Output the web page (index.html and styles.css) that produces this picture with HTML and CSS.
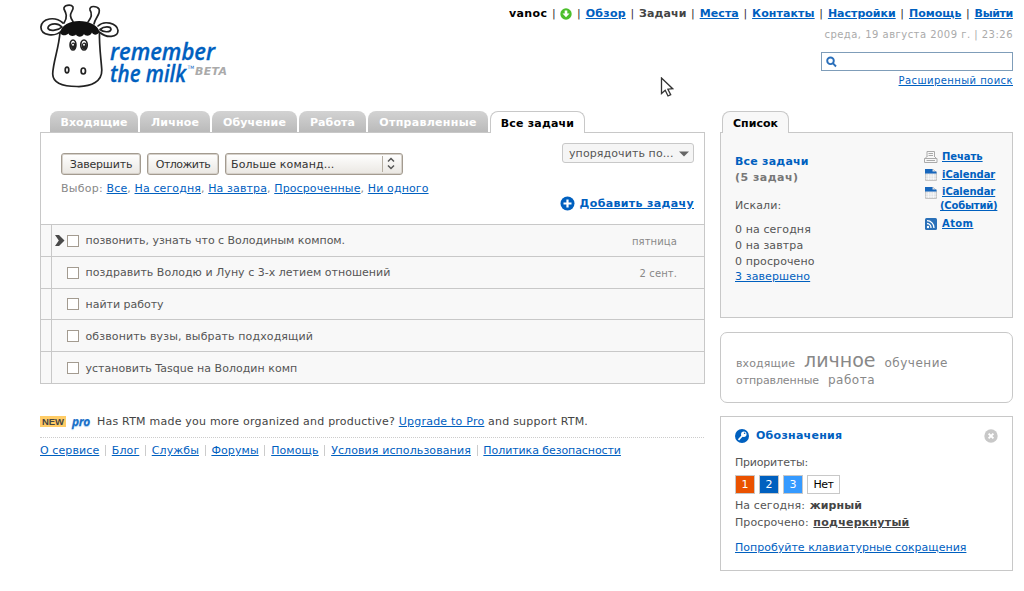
FILE: index.html
```html
<!DOCTYPE html>
<html lang="ru">
<head>
<meta charset="utf-8">
<title>Remember The Milk - Все задачи</title>
<link rel="stylesheet" href="styles.css">
</head>
<body>
<div class="page">
  <header class="header">
    <svg class="logo" width="200" height="92" viewBox="0 0 200 92" role="img" aria-label="Remember the milk">
      <g fill="#fff" stroke="#222" stroke-width="1.700" stroke-linejoin="round" stroke-linecap="round">
        <path d="M20 32C19 48 13 62 12.700 74C13 84 24 86.500 37 86.500C52 87 62 81 61.800 70C61 58 59 46 59.500 31"/>
        <path d="M24 23C28 17 26 13 24 9C23 5 31 4 33 7C34 10 30 12 30.500 16C31 19 32 20 33 21.500"/>
        <path d="M48 22C52 17 52 13 50 10C49 5 57 6 59 9C61 14 55 18 54 24"/>
        <path d="M23 23C15 16 2 18 .900 27C1 36 15 37 21.500 31"/>
        <path d="M22 27C16 21 7 25 8 28.500C10 32 19 30 22 27Z"/>
        <path d="M58 26C64 20 77 23 78 30.500C78 38 66 38 60 32.500"/>
        <path d="M60 29.500C64 26 71 26 71 29.500C70 33 63 32 60 29.500Z"/>
        <ellipse cx="33" cy="45" rx="2.900" ry="5"/><ellipse cx="44" cy="45" rx="3.200" ry="5"/>
        <ellipse cx="27" cy="70" rx="1.800" ry="2.800"/><ellipse cx="43.300" cy="71" rx="2.200" ry="3"/>
      </g>
      <path d="M20 33C21 25 30 21 39 21C49 21 58 25 59.500 32C57 36 53 35 52 32.500C50 37 45 36 44 34C42 38 37 37 36 34.500C34 37 29 36 28.500 33.500C26 36 22 36 20 33Z" fill="#111"/>
      <ellipse cx="33.300" cy="46" rx="2.300" ry="3.500" fill="#222"/><ellipse cx="44.300" cy="46" rx="2.500" ry="3.500" fill="#222"/>
      <circle cx="33" cy="44.700" r="1" fill="#fff"/><circle cx="44" cy="44.700" r="1" fill="#fff"/>
      <g class="logo-text">
        <text x="70" y="59.500" textLength="105" lengthAdjust="spacingAndGlyphs">remember</text>
        <text x="70" y="81.500" textLength="76" lengthAdjust="spacingAndGlyphs">the milk</text>
      </g>
      <text class="logo-tm" x="147.500" y="68.500">TM</text>
      <text class="logo-beta" x="155" y="74.500" textLength="32">BETA</text>
    </svg>
    <div class="head-right">
      <nav class="topnav">
        <b class="user">vanoc</b><i>|</i>
        <svg width="12" height="12" viewBox="0 0 12 12"><circle cx="6" cy="6" r="5.700" fill="#4bbf2b"/><path d="M4.700 2.500h2.600v3H9.500L6 9.300 2.500 5.500h2.200z" fill="#fff"/></svg>
        <i>|</i><a class="s3">Обзор</a><i>|</i><b>Задачи</b><i>|</i><a>Места</a><i>|</i><a>Контакты</a><i>|</i><a class="s0">Настройки</a><i>|</i><a class="s0">Помощь</a><i>|</i><a class="exit">Выйти</a>
      </nav>
      <div class="date">среда, 19 августа 2009 г. | 23:26</div>
      <div class="search"><svg width="12" height="12" viewBox="0 0 12 12" fill="none" stroke="#2a6fba" stroke-width="1.900"><circle cx="4.500" cy="4.800" r="3.300"/><path d="M6.800 7.200L10 10.500"/></svg></div>
      <a class="advanced">Расширенный поиск</a>
    </div>
  </header>

  <div class="columns">
    <main class="left">
      <div class="tabs">
        <span class="tab t1">Входящие</span><span class="tab t2">Личное</span><span class="tab t3">Обучение</span><span class="tab t4">Работа</span><span class="tab t5">Отправленные</span><span class="tab t6 active">Все задачи</span>
      </div>
      <section class="panel">
        <div class="toolbar">
          <div class="commands">
            <div class="buttons">
              <button class="btn done">Завершить</button><button class="btn later">Отложить</button>
              <div class="btn select"><span>Больше команд...</span><svg width="19" height="18" viewBox="0 0 19 18" fill="none" stroke="#555" stroke-width="1.500"><path d="M.5 1v16" stroke="#b5aea2" stroke-width="1"/><path d="M6 6.500l3-3 3 3M6 10.500l3 3 3-3"/></svg></div>
            </div>
            <div class="choose"><span>Выбор:</span> <a>Все</a>, <a>На сегодня</a>, <a>На завтра</a>, <a>Просроченные</a>, <a>Ни одного</a></div>
          </div>
          <div class="tools">
            <div class="sort"><span>упорядочить по...</span><svg width="10" height="6" viewBox="0 0 10 6"><path d="M0 .5h10L5 5.500z" fill="#666"/></svg></div>
            <div class="add"><svg width="15" height="15" viewBox="0 0 15 15"><circle cx="7.500" cy="7.500" r="7" fill="#0060bf"/><path d="M7.500 3.500v8M3.500 7.500h8" stroke="#fff" stroke-width="2.200"/></svg><a>Добавить задачу</a></div>
          </div>
        </div>
        <div class="task"><span class="cursor"><svg width="10" height="11" viewBox="0 0 10 11"><path d="M0 0h4l5.500 5.500L4 11H0l3.800-5.500z" fill="#4a4a4a"/></svg></span><span class="box"></span><span class="name n1">позвонить, узнать что с Володиным компом.</span><span class="due">пятница</span></div>
        <div class="task"><span class="cursor"></span><span class="box"></span><span class="name n2">поздравить Володю и Луну с 3-х летием отношений</span><span class="due">2 сент.</span></div>
        <div class="task"><span class="cursor"></span><span class="box"></span><span class="name n1">найти работу</span></div>
        <div class="task"><span class="cursor"></span><span class="box"></span><span class="name">обзвонить вузы, выбрать подходящий</span></div>
        <div class="task"><span class="cursor"></span><span class="box"></span><span class="name n2">установить Tasque на Володин комп</span></div>
      </section>
      <div class="promo"><span class="new">NEW</span><span class="pro">pro</span><span class="promo-text">Has RTM made you more organized and productive? <a>Upgrade to Pro</a> and support RTM.</span></div>
      <footer class="footer"><a>О сервисе</a><i></i><a>Блог</a><i></i><a>Службы</a><i></i><a>Форумы</a><i></i><a>Помощь</a><i></i><a>Условия использования</a><i></i><a class="policy">Политика безопасности</a></footer>
    </main>

    <aside class="right">
      <div class="tabs"><span class="tab list active">Список</span></div>
      <section class="panel summary">
        <div class="stats">
          <h2>Все задачи</h2>
          <div class="count">(5 задач)</div>
          <div class="searched">Искали:</div>
          <div>0 на сегодня</div><div>0 на завтра</div><div>0 просрочено</div><div><a>3 завершено</a></div>
        </div>
        <div class="exports">
          <div class="export"><svg width="14" height="12" viewBox="0 0 14 12" fill="#f8f8f8" stroke="#aaa"><path d="M3 6V.5h7.500V6M4.500 2.500h4.500M4.500 4.500h4.500M3 5.500L.5 8M10.500 5.500L13 8"/><path d="M.5 7.500h12.500v4H.5zM2.500 9.500h8.500"/></svg><a>Печать</a></div>
          <div class="export"><svg width="14" height="12" viewBox="0 0 14 12"><path d="M1.500.5h8l3 3v8h-11z" fill="#dfe1e4" stroke="#c4c4c4"/><path d="M1 0h7.500v2.500H12.500v2H1z" fill="#1767bd"/><path d="M1.500 7h11M1.500 9.300h11M4.500 5v6M7 5v6M9.500 5v6" stroke="#fff" stroke-width=".6"/></svg><a class="ical">iCalendar</a></div>
          <div class="export tall"><svg width="14" height="12" viewBox="0 0 14 12"><path d="M1.500.5h8l3 3v8h-11z" fill="#dfe1e4" stroke="#c4c4c4"/><path d="M1 0h7.500v2.500H12.500v2H1z" fill="#1767bd"/><path d="M1.500 7h11M1.500 9.300h11M4.500 5v6M7 5v6M9.500 5v6" stroke="#fff" stroke-width=".6"/></svg><a class="ical">iCalendar<br><span class="events">(Событий)</span></a></div>
          <div class="export"><svg width="14" height="12" viewBox="0 0 14 12"><rect x="1" width="12" height="12" rx="1.500" fill="#2a70b8"/><circle cx="4" cy="9" r="1.200" fill="#fff"/><path d="M3 5.500a4 4 0 0 1 4 4.500M3 2.700a7 7 0 0 1 7 7.300" fill="none" stroke="#fff" stroke-width="1.300"/></svg><a class="atom">Atom</a></div>
        </div>
      </section>
      <section class="cloud">
        <div><span class="c1">входящие</span><span class="c2">личное</span><span class="c3">обучение</span></div>
        <div><span class="c4">отправленные</span><span class="c5">работа</span></div>
      </section>
      <section class="legend">
        <div class="legend-head"><svg width="14" height="14" viewBox="0 0 14 14"><circle cx="7" cy="7" r="7" fill="#0060bf"/><path d="M3.500 10.800L8 6" stroke="#fff" stroke-width="1.700"/><circle cx="8.800" cy="5.200" r="2.700" fill="#fff"/><circle cx="9.600" cy="4.300" r=".8" fill="#0060bf"/></svg><h2>Обозначения</h2><svg width="14" height="14" viewBox="0 0 14 14"><circle cx="7" cy="7" r="6.700" fill="#c8c8c8"/><path d="M4.600 4.600l4.800 4.800M9.400 4.600l-4.800 4.800" stroke="#fff" stroke-width="2"/></svg></div>
        <div class="prio-label">Приоритеты:</div>
        <div class="prios"><span class="p1">1</span><span class="p2">2</span><span class="p3">3</span><span class="p0">Нет</span></div>
        <div class="line">На сегодня: <b>жирный</b></div>
        <div class="line">Просрочено: <b class="under">подчеркнутый</b></div>
        <a class="keys">Попробуйте клавиатурные сокращения</a>
      </section>
    </aside>
  </div>
</div>
<svg class="pointer" width="14" height="21" viewBox="0 0 14 21"><path d="M1.500 1v15.500l3.700-3.300 2.800 5.800 2.700-1.300-2.800-5.500 4.800-.5z" fill="#fff" stroke="#333" stroke-width="1.300"/></svg>
</body>
</html>
```
FILE: styles.css
```css
* { box-sizing: border-box; }
body {
  margin: 0;
  background: #fff;
  color: #555;
  font: 11px/15px "DejaVu Sans", sans-serif;
  letter-spacing: .1px;
  white-space: nowrap;
}
a { color: #0060bf; text-decoration: underline; text-underline-offset: 1px; }
h2 { margin: 0; font-size: 11px; color: #0060bf; letter-spacing: .22px; }
svg { flex: none; display: block; }
.page { width: 973px; margin-left: 40px; }

.header { display: flex; justify-content: space-between; height: 111px; }
.logo-text { font: italic 600 22.5px "Open Sans", sans-serif; fill: #0060bf; stroke: #0060bf; stroke-width: .3px; letter-spacing: 0; }
.logo-tm { font: 4.5px "DejaVu Sans", sans-serif; fill: #0060bf; }
.logo-beta { font: italic bold 11px "DejaVu Sans", sans-serif; fill: #aaa; }
.head-right { display: flex; flex-direction: column; align-items: flex-end; width: 504px; }
.topnav { display: flex; justify-content: space-between; align-items: center; width: 504px; height: 15px; margin-top: 6px; font-weight: bold; }
.topnav i { font-style: normal; font-weight: normal; color: #333; width: 4px; }
.topnav b { color: #444; }
.topnav .user { color: #000; letter-spacing: .35px; }
.topnav .s0 { letter-spacing: 0; }
.topnav .s3 { letter-spacing: .25px; }
.topnav .exit { letter-spacing: -.35px; }
.date { margin-top: 6px; font-size: 10px; letter-spacing: .48px; color: #aaa; }
.search { width: 192px; height: 19px; margin-top: 10px; padding: 3px 4px; border: 1px solid #7f9db9; }
.advanced { margin-top: 2px; font-size: 10px; letter-spacing: .43px; }

.columns { display: flex; justify-content: space-between; }
.left { width: 665px; }
.right { width: 293px; }
.tabs { display: flex; gap: 2px; height: 22px; padding-left: 10px; }
.tab { height: 21px; padding-top: 4px; border-radius: 8px 8px 0 0; background: linear-gradient(#d3d3d3, #bababa); color: #fff; font-weight: bold; text-align: center; }
.t1 { width: 88px; }
.t2 { width: 70px; letter-spacing: .2px; }
.t3 { width: 85px; letter-spacing: .15px; }
.t4 { width: 67px; }
.t5 { width: 120px; letter-spacing: .3px; }
.tab.active { position: relative; z-index: 1; height: 22px; padding-top: 4px; border: 1px solid #c8c8c8; border-bottom: 0; background: #fff; color: #000; letter-spacing: .2px; }
.tab.t6 { width: 95px; }
.panel { margin-top: -1px; border: 1px solid #c8c8c8; }

.toolbar { display: flex; justify-content: space-between; height: 91px; padding: 10px 10px 0 20px; }
.commands { padding-top: 10px; }
.buttons { display: flex; gap: 6px; }
.btn { display: flex; align-items: center; justify-content: center; height: 22px; padding: 1px 0 0; border: 1px solid #a39b90; border-radius: 3px; background: linear-gradient(#fff, #eae7e2); box-shadow: inset 0 0 0 1px #d6d1ca; color: #333; font: 11px "DejaVu Sans", sans-serif; }
.done { width: 80px; letter-spacing: -.2px; }
.later { width: 72px; letter-spacing: -.55px; }
.btn.select { width: 178px; justify-content: space-between; padding: 0 1px 0 5px; letter-spacing: .1px; }
.choose { margin-top: 6px; color: #888; letter-spacing: .12px; }
.choose span { letter-spacing: .25px; }
.tools { display: flex; flex-direction: column; align-items: flex-end; }
.sort { display: flex; align-items: center; justify-content: space-between; width: 132px; height: 20px; padding: 1px 4px 0 6px; border: 1px solid #c8c8c8; border-radius: 3px; background: #f5f5f5; }
.add { display: flex; align-items: center; gap: 5px; margin-top: 33px; font-weight: bold; letter-spacing: .35px; }

.task { display: flex; height: 31.8px; border-top: 1px solid #c8c8c8; background: #f8f8f8; align-items: center; }
.cursor { display: flex; align-items: center; align-self: stretch; width: 16px; margin-left: 10px; padding-left: 3px; border-left: 1px solid #c8c8c8; }
.box { width: 12px; height: 12px; margin: 1px 6.5px 0 0; border: 1px solid #a39b90; background: #fff; }
.name { flex: 1; letter-spacing: .12px; padding-top: 1px; }
.n1 { letter-spacing: -.02px; }
.n2 { letter-spacing: .02px; }
.due { padding: 2px 27px 0 0; font-size: 10px; color: #888; }

.promo { display: flex; align-items: center; height: 15px; margin-top: 30px; color: #444; }
.new { height: 11px; width: 26px; background: #fc6; color: #444; font: bold 9.5px/11px "Liberation Sans", sans-serif; text-align: center; letter-spacing: 0; }
.pro { margin: 0 6px; width: 19px; color: #1a70c8; font: italic bold 12px/15px "Open Sans", sans-serif; text-shadow: 0 1px 1px #9cc8f0; letter-spacing: -.5px; }
.promo-text { letter-spacing: .22px; }
.footer { display: flex; justify-content: space-between; width: 664px; margin-top: 8px; padding: 5px 83px 0 0; border-top: 1px dotted #ccc; }
.footer i { width: 1px; height: 11px; margin-top: 2px; background: #ccc; }
.policy { letter-spacing: -.08px; }

.right .tabs { padding-left: 2px; }
.tab.active.list { width: 67px; background: #f8f8f8; letter-spacing: 0; }
.summary { display: flex; justify-content: space-between; height: 186px; padding: 21px 13px 0 14px; background: #f8f8f8; }
.stats { line-height: 15.7px; }
.count { color: #777; font-weight: bold; letter-spacing: .47px; }
.searched { margin: 13px 0 8px; }
.exports { display: flex; flex-direction: column; gap: 3px; width: 75px; margin-top: -5px; font-size: 10px; font-weight: bold; letter-spacing: -.05px; }
.export { display: flex; gap: 4px; line-height: 15px; }
.export svg { margin-top: 2px; }
.export a { text-decoration-thickness: 1px; }
.tall { line-height: 14px; }
.events { margin-left: -2px; letter-spacing: -.2px; }
.atom { letter-spacing: .4px; }

.cloud { height: 71px; margin-top: 14px; padding: 16px 15px 0; border: 1px solid #c8c8c8; border-radius: 7px; color: #888; }
.cloud div { display: flex; align-items: baseline; gap: 9px; }
.cloud div:first-child { height: 22px; line-height: 22px; }
.cloud div:last-child { height: 18px; line-height: 18px; }
.c2 { font-size: 19px; letter-spacing: 0; }
.c3 { font-size: 12px; letter-spacing: .5px; }
.c4 { letter-spacing: -.1px; }
.c5 { font-size: 12px; letter-spacing: .5px; }
.legend { height: 155px; margin-top: 13px; padding: 11px 14px; border: 1px solid #c8c8c8; }
.legend-head { display: flex; align-items: center; }
.legend-head h2 { flex: 1; margin-left: 7px; letter-spacing: .27px; }
.prio-label { margin-top: 12px; letter-spacing: -.2px; }
.prios { display: flex; gap: 4px; margin: 5px 0 3px; }
.prios span { width: 20px; height: 19px; border: 1px solid #c8c8c8; color: #fff; line-height: 18px; text-align: center; }
.prios .p1 { background: #ea5200; }
.prios .p2 { background: #0060bf; }
.prios .p3 { background: #359aff; }
.prios .p0 { width: 33px; color: #000; letter-spacing: -.4px; }
.line { line-height: 17px; }
.line b { color: #444; margin-left: 1px; }
.under { text-decoration: underline; letter-spacing: .25px; }
.keys { display: block; margin-top: 9px; letter-spacing: .01px; }

.pointer { position: absolute; left: 660px; top: 77px; }
```
